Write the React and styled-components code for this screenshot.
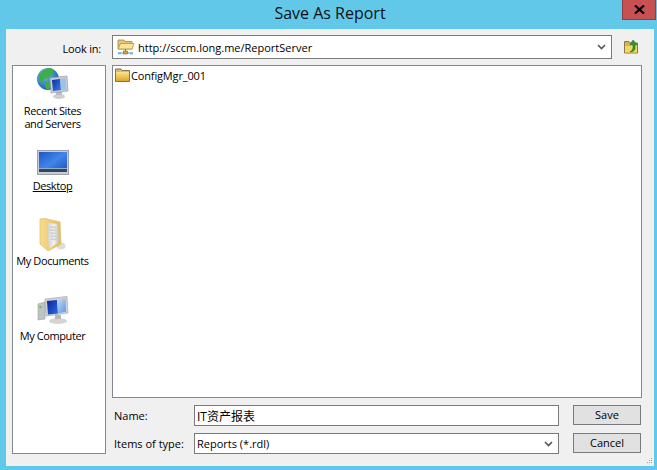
import React from "react";
import styled, { createGlobalStyle } from "styled-components";

const GlobalStyle = createGlobalStyle`
  html, body {
    margin: 0;
    padding: 0;
    background: #62c8ea;
  }
`;

const UI_FONT = `"Open Sans", "Noto Sans", "Noto Sans CJK SC", sans-serif`;

const Window = styled.div`
  position: relative;
  width: 657px;
  height: 470px;
  box-sizing: border-box;
  padding: 0 3px 4px 6px;
  background: #62c8ea;
  display: flex;
  flex-direction: column;
  font-family: ${UI_FONT};
  font-size: 11px;
  color: #000;
  overflow: hidden;
`;

const TitleBar = styled.div`
  height: 29px;
  box-sizing: border-box;
  padding-bottom: 3px;
  flex: none;
  display: flex;
  align-items: center;
  justify-content: center;
  font-size: 16px;
  color: #111;
`;

const CloseButton = styled.div`
  position: absolute;
  top: 0;
  right: 1px;
  width: 34px;
  height: 20px;
  box-sizing: border-box;
  background: #c75050;
  border: 1px solid #8f3f3f;
  border-top: none;
  display: flex;
  align-items: center;
  justify-content: center;
`;

const Client = styled.div`
  flex: 1;
  background: #f0f0f0;
  padding: 6px 12px 12px 6px;
  display: grid;
  grid-template-columns: 94px 1fr;
  grid-template-rows: 24px 1fr;
  column-gap: 6px;
  row-gap: 6px;
  position: relative;
`;

const LookRow = styled.div`
  grid-column: 1 / 3;
  display: grid;
  grid-template-columns: 94px 500px 1fr;
  column-gap: 6px;
  align-items: center;
`;

const RowLabel = styled.label`
  text-align: right;
  padding: 2px 5px 0 0;
  letter-spacing: -0.2px;
`;

const Combo = styled.div`
  height: ${({ $h }) => $h}px;
  box-sizing: border-box;
  background: #fff;
  border: 1px solid #7a7a7a;
  display: flex;
  align-items: center;
  padding: 0 5px 0 ${({ $flush }) => ($flush ? 2 : 4)}px;
  gap: 3px;
`;

const ComboText = styled.span`
  flex: 1;
  white-space: nowrap;
`;

const UpButton = styled.div`
  display: flex;
  padding-left: 6px;
`;

const Sidebar = styled.div`
  grid-row: 2;
  background: #fff;
  border: 1px solid #828790;
  padding: 0 13px 0 0;
  display: flex;
  flex-direction: column;
  align-items: center;
`;

const Place = styled.div`
  height: 75px;
  flex: none;
  width: 100%;
  display: flex;
  flex-direction: column;
  align-items: center;
  text-align: center;
  line-height: 13px;
  white-space: nowrap;
`;

const PlaceIcon = styled.div`
  height: 38px;
  box-sizing: border-box;
  padding-bottom: ${({ $pad }) => $pad}px;
  display: flex;
  align-items: flex-end;
`;

const PlaceLabel = styled.span`
  letter-spacing: -0.4px;
  text-decoration: ${({ $active }) => ($active ? "underline" : "none")};
`;

const Main = styled.div`
  grid-row: 2;
  display: flex;
  flex-direction: column;
  min-height: 0;
`;

const FileList = styled.div`
  flex: 1;
  background: #fff;
  border: 1px solid #828790;
  padding: 1px 2px;
`;

const FileItem = styled.div`
  display: flex;
  align-items: center;
  gap: 1px;
  height: 16px;
  letter-spacing: -0.15px;
`;

const FormRow = styled.div`
  display: grid;
  grid-template-columns: 82px 365px 82px;
  margin-top: 7px;
  align-items: start;
  & > label {
    align-self: center;
    padding: 0 0 1px 2px;
  }
`;

const TextBox = styled.div`
  height: 21px;
  box-sizing: border-box;
  background: #fff;
  border: 1px solid #7a7a7a;
  padding-left: 2px;
  display: flex;
  align-items: center;
  font-size: 12px;
`;

const Button = styled.div`
  height: 20px;
  margin-left: 14px;
  padding-bottom: 1px;
  box-sizing: border-box;
  background: #e1e1e1;
  border: 1px solid #7a7a7a;
  display: flex;
  align-items: center;
  justify-content: center;
`;

const Grip = styled.svg`
  position: absolute;
  right: 1px;
  bottom: 1px;
`;

const Chevron = () => (
  <svg width="9" height="6" viewBox="0 0 9 6">
    <path d="M1 1 L4.5 4.5 L8 1" fill="none" stroke="#555" strokeWidth="1.6" />
  </svg>
);

const FolderIcon = () => (
  <svg width="15" height="14" viewBox="0 0 15 14">
    <defs>
      <linearGradient id="fold" x1="0" y1="0" x2="0" y2="1">
        <stop offset="0" stopColor="#fbe58c" />
        <stop offset="1" stopColor="#dfa52c" />
      </linearGradient>
    </defs>
    <path d="M0.5 1 L6 1 L7 2.5 L14.5 2.5 L14.5 13.5 L0.5 13.5 Z" fill="#d9bd6c" stroke="#7f7350" />
    <rect x="1" y="4" width="13" height="9" fill="url(#fold)" />
  </svg>
);

const NetFolderIcon = () => (
  <svg width="18" height="18" viewBox="0 0 18 18">
    <path d="M1 2 L7 2 L8 3.5 L15 3.5 L15 11 L1 11 Z" fill="#e5c56f" stroke="#a08548" strokeWidth="0.8" />
    <path d="M1 11 L3.5 5.5 L17 5.5 L15 11 Z" fill="#fbe39a" stroke="#b3924a" strokeWidth="0.8" />
    <path d="M8.5 11 V14" stroke="#7a7a7a" />
    <path d="M3 15 H14" stroke="#8a8a8a" />
    <rect x="6.5" y="13" width="4" height="3" fill="#d7a12f" stroke="#8a6a20" strokeWidth="0.6" />
    <rect x="1" y="14" width="3" height="2.5" fill="#8fb7dd" />
    <rect x="13" y="14" width="3" height="2.5" fill="#8fb7dd" />
  </svg>
);

const UpFolderIcon = () => (
  <svg width="15" height="14" viewBox="0 0 15 14">
    <path d="M0.5 1.5 L5 1.5 L6 3 L13.5 3 L13.5 13 L0.5 13 Z" fill="#d8b24c" stroke="#8d7a4a" />
    <rect x="1" y="6" width="12" height="6.5" fill="#f3d75e" />
    <path d="M9 0 L13 4.5 L11 4.5 L11 9 Q10 12 6 12 Q9 10 9 8 L9 4.5 L6 4.5 Z" fill="#2a9a35" stroke="#176f22" strokeWidth="0.5" />
  </svg>
);

const GlobeIcon = () => (
  <svg width="32" height="32" viewBox="0 0 32 32">
    <defs>
      <radialGradient id="sea" cx="0.35" cy="0.3" r="0.8">
        <stop offset="0" stopColor="#6fc6f0" />
        <stop offset="1" stopColor="#17509f" />
      </radialGradient>
      <linearGradient id="scr" x1="0" y1="0" x2="1" y2="1">
        <stop offset="0" stopColor="#0c2da8" />
        <stop offset="1" stopColor="#3f7be0" />
      </linearGradient>
    </defs>
    <circle cx="11" cy="12" r="11" fill="url(#sea)" />
    <path d="M2 8 Q7 1 14 1 Q19 5 13 9 Q11 13 8 11 Q7 14 4 15 Q1 12 2 8 Z M8 15 Q14 12 15 17 Q14 21 11 23 Q7 20 8 15 Z" fill="#3fae46" />
    <ellipse cx="22" cy="29.5" rx="6" ry="2.5" fill="#d0d0d0" />
    <rect x="19" y="25" width="6" height="3" fill="#bdbdbd" />
    <path d="M13 11 L30 9 L31 24 L14 26 Z" fill="#c3cbd3" stroke="#8f98a3" strokeWidth="0.6" />
    <path d="M15 13 L23 12 L24 23 L16 24 Z" fill="url(#scr)" />
    <path d="M23 12 L28.5 11.5 L29 22.5 L24 23 Z" fill="#9cc0ee" />
  </svg>
);

const DesktopIcon = () => (
  <svg width="32" height="25" viewBox="0 0 32 25">
    <defs>
      <linearGradient id="desk" x1="0" y1="0" x2="1" y2="1">
        <stop offset="0" stopColor="#1f55c6" />
        <stop offset="0.5" stopColor="#3f86ea" />
        <stop offset="1" stopColor="#1d4fb4" />
      </linearGradient>
    </defs>
    <rect x="0.5" y="0.5" width="31" height="24" fill="#c8ccd6" stroke="#9aa0ad" />
    <rect x="2" y="2" width="28" height="20" fill="url(#desk)" />
    <rect x="2" y="18" width="28" height="4" fill="#33485f" />
    <rect x="2" y="18" width="28" height="1" fill="#8faccc" />
  </svg>
);

const DocsIcon = () => (
  <svg width="27" height="33" viewBox="0 0 27 33">
    <defs>
      <linearGradient id="doc" x1="0" y1="0" x2="1" y2="0">
        <stop offset="0" stopColor="#f6dd8e" />
        <stop offset="1" stopColor="#e6bd58" />
      </linearGradient>
      <linearGradient id="page" x1="0" y1="0" x2="1" y2="0">
        <stop offset="0" stopColor="#cfcfcf" />
        <stop offset="0.6" stopColor="#f2f2f2" />
        <stop offset="1" stopColor="#bdbdbd" />
      </linearGradient>
    </defs>
    <ellipse cx="22" cy="28" rx="4.5" ry="3.5" fill="#dcdcdc" />
    <path d="M1 1 L6 0.5 L21 4 L22 26 L9 33 L1 26 Z" fill="url(#doc)" stroke="#d8b663" strokeWidth="0.6" />
    <path d="M8 5 L19 6 L20 24 L10 31 Z" fill="url(#page)" />
    <path d="M11 9 L17 9.5 M11 12 L17.5 12.5 M11.5 15 L17.5 15.5 M12 18 L18 18.5 M12 21 L18 21.5" stroke="#cfcfcf" strokeWidth="1.5" />
  </svg>
);

const ComputerIcon = () => (
  <svg width="32" height="28" viewBox="0 0 32 28">
    <defs>
      <linearGradient id="pc" x1="0" y1="0" x2="1" y2="1">
        <stop offset="0" stopColor="#0a1fa0" />
        <stop offset="1" stopColor="#2f6fe0" />
      </linearGradient>
      <linearGradient id="pcGlare" x1="0" y1="0" x2="1" y2="1">
        <stop offset="0" stopColor="#c9ddf8" />
        <stop offset="1" stopColor="#5a92e6" />
      </linearGradient>
    </defs>
    <path d="M1 8 L8 6 L8 23 L1 24 Z" fill="#bfc3c4" stroke="#8d9092" strokeWidth="0.5" />
    <rect x="2.5" y="10" width="2" height="2" fill="#5fc04f" />
    <ellipse cx="21" cy="25" rx="9" ry="3" fill="#d4d4d4" />
    <rect x="18" y="19" width="6" height="4" fill="#b8b8b8" />
    <path d="M8 3 L30 0.5 L31 17 L9 20 Z" fill="#ccd1d6" stroke="#9aa1a8" strokeWidth="0.6" />
    <path d="M10 5 L20 4 L21 17.5 L11 18.5 Z" fill="url(#pc)" />
    <path d="M20 4 L28.5 3 L29 15.5 L21 17.5 Z" fill="url(#pcGlare)" />
  </svg>
);

const places = [
  { key: "recent", icon: <GlobeIcon />, pad: 5, label: <>Recent Sites<br />and Servers</> },
  { key: "desktop", icon: <DesktopIcon />, pad: 4, label: "Desktop", active: true },
  { key: "docs", icon: <DocsIcon />, pad: 3, label: "My Documents" },
  { key: "computer", icon: <ComputerIcon />, pad: 5, label: "My Computer" },
];

export default function App() {
  return (
    <>
      <GlobalStyle />
      <Window>
        <TitleBar>Save As Report</TitleBar>
        <CloseButton>
          <svg width="11" height="9" viewBox="0 0 11 9">
            <path d="M1 0.5 L10 8.5 M10 0.5 L1 8.5" stroke="#000" strokeWidth="2.2" />
          </svg>
        </CloseButton>
        <Client>
          <LookRow>
            <RowLabel>Look in:</RowLabel>
            <Combo $h={24}>
              <NetFolderIcon />
              <ComboText>http://sccm.long.me/ReportServer</ComboText>
              <Chevron />
            </Combo>
            <UpButton><UpFolderIcon /></UpButton>
          </LookRow>
          <Sidebar>
            {places.map((p) => (
              <Place key={p.key}>
                <PlaceIcon $pad={p.pad}>{p.icon}</PlaceIcon>
                <PlaceLabel $active={p.active}>{p.label}</PlaceLabel>
              </Place>
            ))}
          </Sidebar>
          <Main>
            <FileList>
              <FileItem>
                <FolderIcon />
                ConfigMgr_001
              </FileItem>
            </FileList>
            <FormRow>
              <label>Name:</label>
              <TextBox>IT资产报表</TextBox>
              <Button>Save</Button>
            </FormRow>
            <FormRow>
              <label>Items of type:</label>
              <Combo $h={21} $flush>
                <ComboText>Reports (*.rdl)</ComboText>
                <Chevron />
              </Combo>
              <Button>Cancel</Button>
            </FormRow>
          </Main>
          <Grip width="8" height="8" viewBox="0 0 8 8">
            <path d="M6 1h1v1h-1z M4 3h1v1h-1z M6 3h1v1h-1z M2 5h1v1h-1z M4 5h1v1h-1z M6 5h1v1h-1z" fill="#a0a0a0" />
          </Grip>
        </Client>
      </Window>
    </>
  );
}
